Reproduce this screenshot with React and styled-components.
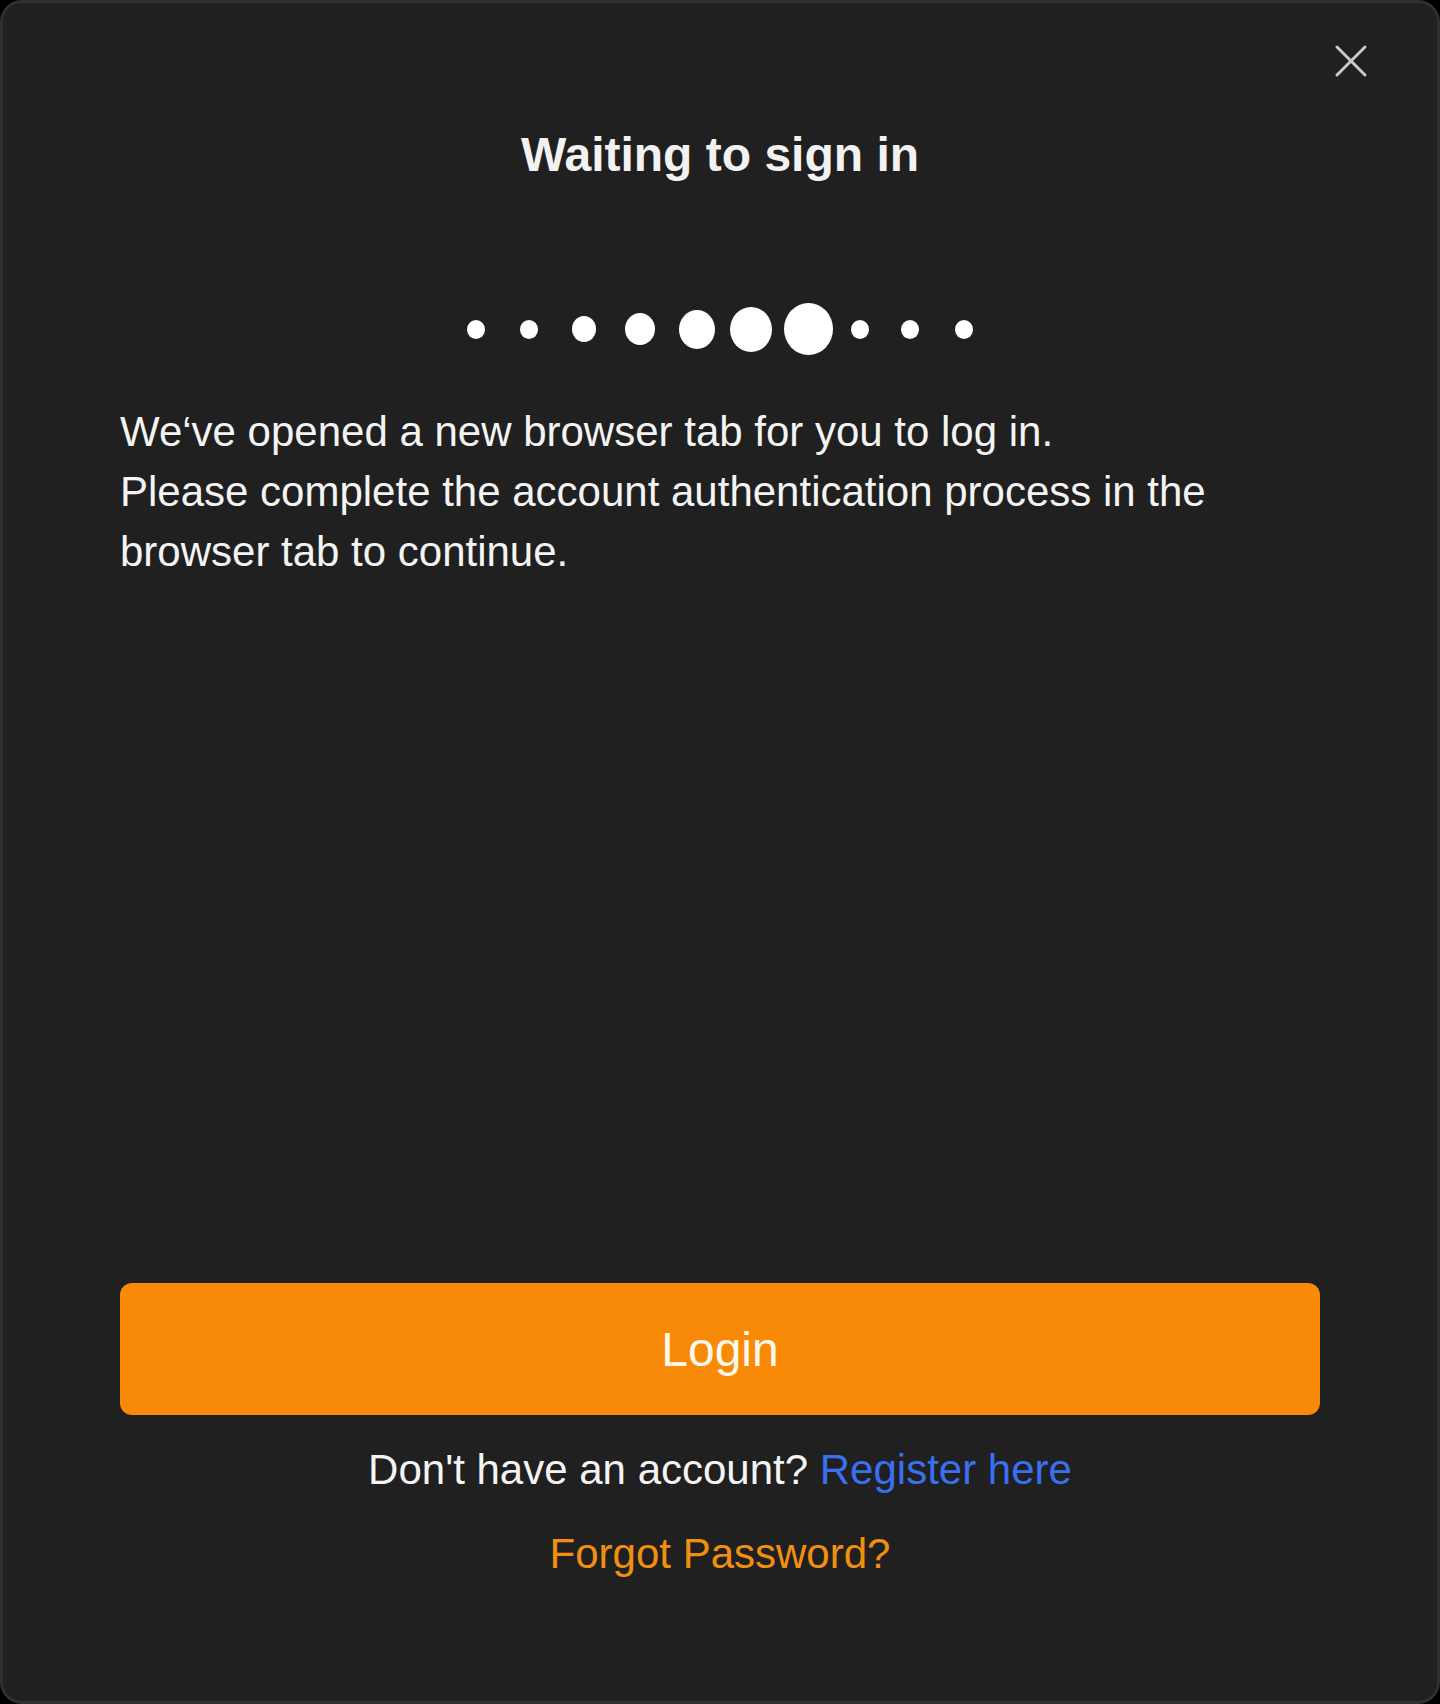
import styled, { createGlobalStyle } from "styled-components";

const GlobalStyle = createGlobalStyle`
  html, body {
    margin: 0;
    padding: 0;
    background: #000;
  }
  * {
    box-sizing: border-box;
  }
`;

// loader dots: diameter and space before each one
const dots = [
  { size: 18, gap: 0 },
  { size: 18, gap: 35 },
  { size: 24, gap: 34 },
  { size: 30, gap: 29 },
  { size: 36, gap: 24 },
  { size: 42, gap: 15 },
  { size: 49, gap: 12 },
  { size: 18, gap: 18 },
  { size: 18, gap: 32 },
  { size: 18, gap: 36 },
];

function CloseIcon() {
  return (
    <svg width="34" height="34" viewBox="0 0 34 34" fill="none">
      <path d="M3 3L31 31M31 3L3 31" stroke="#c9c9c9" strokeWidth="3" strokeLinecap="round" />
    </svg>
  );
}

function App() {
  return (
    <>
      <GlobalStyle />
      <Panel>
        <HeaderRow>
          <CloseButton aria-label="close">
            <CloseIcon />
          </CloseButton>
        </HeaderRow>
        <Content>
          <Title>Waiting to sign in</Title>
          <DotRow>
            {dots.map((dot, index) => (
              <Dot key={index} size={dot.size} gap={dot.gap} />
            ))}
          </DotRow>
          <Message>
            We‘ve opened a new browser tab for you to log in.
            <br />
            Please complete the account authentication process in the browser tab to continue.
          </Message>
          <Footer>
            <LoginButton>Login</LoginButton>
            <RegisterLine>
              Don't have an account? <RegisterLink>Register here</RegisterLink>
            </RegisterLine>
            <ForgotLink>Forgot Password?</ForgotLink>
          </Footer>
        </Content>
      </Panel>
    </>
  );
}

export default App;

const Panel = styled.div`
  display: flex;
  flex-direction: column;
  width: 1440px;
  height: 1704px;
  background-color: #202020;
  border: 3px solid #303030;
  border-radius: 22px;
  font-family: "Liberation Sans", Arial, sans-serif;
  color: #f5f5f5;
  overflow: hidden;
`;

const HeaderRow = styled.div`
  display: flex;
  justify-content: flex-end;
  padding: 41px 69px 0 0;
`;

const CloseButton = styled.button`
  display: flex;
  align-items: center;
  justify-content: center;
  width: 34px;
  height: 34px;
  padding: 0;
  border: none;
  background: transparent;
  cursor: pointer;
`;

const Content = styled.div`
  flex: 1;
  display: flex;
  flex-direction: column;
  padding: 0 117px 122px;
`;

const Title = styled.h1`
  margin: 49px 0 0;
  font-size: 48px;
  line-height: 56px;
  font-weight: 700;
  text-align: center;
  color: #f2f2f2;
`;

const DotRow = styled.div`
  display: flex;
  justify-content: center;
  align-items: center;
  height: 52px;
  margin-top: 120px;
`;

const Dot = styled.span`
  display: block;
  flex: none;
  margin-left: ${(props) => props.gap}px;
  width: ${(props) => props.size}px;
  height: ${(props) => Math.round(props.size * 1.07)}px;
  border-radius: 50%;
  background-color: #ffffff;
`;

const Message = styled.p`
  margin: 47px 0 0;
  font-size: 42px;
  line-height: 60px;
  color: #f4f4f4;
`;

const Footer = styled.div`
  margin-top: auto;
  display: flex;
  flex-direction: column;
  align-items: center;
`;

const LoginButton = styled.button`
  width: 100%;
  height: 132px;
  border: none;
  border-radius: 12px;
  background-color: #f98a07;
  color: #fff8ec;
  font-family: inherit;
  font-size: 48px;
  cursor: pointer;
`;

const RegisterLine = styled.div`
  margin-top: 30px;
  font-size: 42px;
  line-height: 50px;
  color: #f4f4f4;
`;

const RegisterLink = styled.a`
  color: #3a6ff0;
  cursor: pointer;
`;

const ForgotLink = styled.a`
  margin-top: 34px;
  font-size: 42px;
  line-height: 50px;
  color: #f0900e;
  cursor: pointer;
`;
